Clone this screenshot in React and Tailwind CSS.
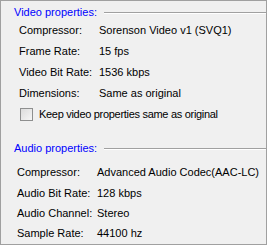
import React from "react";

const video = [
  ["Compressor:", "Sorenson Video v1 (SVQ1)"],
  ["Frame Rate:", "15 fps"],
  ["Video Bit Rate:", "1536 kbps"],
  ["Dimensions:", "Same as original"],
];

const audio = [
  ["Compressor:", "Advanced Audio Codec(AAC-LC)", "h-[21px]"],
  ["Audio Bit Rate:", "128 kbps", "h-[20px]"],
  ["Audio Channel:", "Stereo", "h-[20px]"],
  ["Sample Rate:", "44100 hz", "h-[20px]"],
];

function Heading({ title }) {
  return (
    <div className="flex items-center h-4 pl-[13px]">
      <span className="text-[#0000ff] whitespace-nowrap">{title}</span>
      <div className="flex-1 ml-[7px] mt-[1px] flex flex-col">
        <div className="h-px bg-[#a0a0a0]" />
        <div className="h-px bg-white" />
      </div>
    </div>
  );
}

export default function App() {
  return (
    <div
      className="w-[267px] h-[245px] bg-[#f0f0f0] border border-[#a0a0a0] flex flex-col text-[11px] text-black leading-none overflow-hidden"
      style={{ fontFamily: '"Liberation Sans", Arial, sans-serif' }}
    >
      <div className="mt-[3px]">
        <Heading title="Video properties:" />
      </div>
      <div className="pl-[18px]">
        {video.map(([k, v]) => (
          <div key={k} className="flex items-center h-[21px]">
            <span className="w-20 shrink-0">{k}</span>
            <span className="whitespace-nowrap">{v}</span>
          </div>
        ))}
        <div className="flex items-center h-[21px] pl-[1px] gap-[6px]">
          <div className="w-[13px] h-[13px] border border-[#8e8f8f] bg-gradient-to-br from-[#dcdcdc] to-[#f6f6f6] shrink-0" />
          <span className="whitespace-nowrap tracking-[-0.3px]">Keep video properties same as original</span>
        </div>
      </div>
      <div className="mt-[15px]">
        <Heading title="Audio properties:" />
      </div>
      <div className="pl-4 mt-[6px]">
        {audio.map(([k, v, h]) => (
          <div key={k} className={`flex items-center ${h}`}>
            <span className="w-20 shrink-0">{k}</span>
            <span className="whitespace-nowrap">{v}</span>
          </div>
        ))}
      </div>
    </div>
  );
}
